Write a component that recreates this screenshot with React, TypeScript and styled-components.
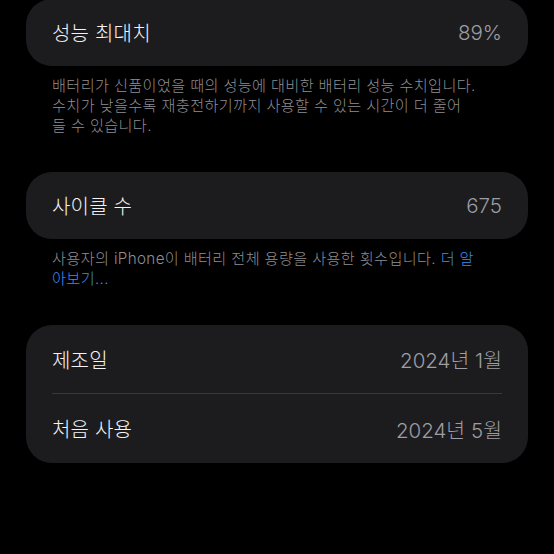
import React from "react";
import styled, { createGlobalStyle } from "styled-components";

const GlobalStyle = createGlobalStyle`
  html, body {
    margin: 0;
    padding: 0;
    background: #000;
  }
  body {
    font-family: Inter, "Noto Sans CJK KR", sans-serif;
    -webkit-font-smoothing: antialiased;
  }
`;

const Page = styled.div`
  width: 554px;
  height: 554px;
  overflow: hidden;
  box-sizing: border-box;
  padding: 0 26px;
  background: #000;
`;

const Inner = styled.div`
  margin-top: -1px;
  display: flex;
  flex-direction: column;
`;

const Card = styled.section`
  background: #1c1c1e;
  border-radius: 26px;
  display: flex;
  flex-direction: column;
`;

const Row = styled.div<{ $h: number; $divider?: boolean }>`
  height: ${(p) => p.$h}px;
  margin: 0 26px;
  display: flex;
  align-items: center;
  justify-content: space-between;
  border-top: ${(p) => (p.$divider ? "1px solid #38383a" : "none")};
`;

const Label = styled.span`
  font-size: 20px;
  font-weight: 300;
  color: #f4f4f6;
  letter-spacing: 0.2px;
`;

const Value = styled.span`
  font-size: 20.5px;
  font-weight: 300;
  color: #9d9da3;
  letter-spacing: 0;
`;

const Footnote = styled.p`
  margin: 10px 26px 36px;
  font-size: 15.2px;
  font-weight: 300;
  line-height: 20px;
  color: #8e8e94;
  letter-spacing: 0.35px;
`;

const Link = styled.span`
  color: #3d8bf3;
`;

export default function App() {
  return (
    <>
      <GlobalStyle />
      <Page>
        <Inner>
          <Card>
            <Row $h={67}>
              <Label>성능 최대치</Label>
              <Value>89%</Value>
            </Row>
          </Card>
          <Footnote>
            배터리가 신품이었을 때의 성능에 대비한 배터리 성능 수치입니다.
            <br />
            수치가 낮을수록 재충전하기까지 사용할 수 있는 시간이 더 줄어
            <br />들 수 있습니다.
          </Footnote>

          <Card>
            <Row $h={67}>
              <Label>사이클 수</Label>
              <Value>675</Value>
            </Row>
          </Card>
          <Footnote>
            사용자의 iPhone이 배터리 전체 용량을 사용한 횟수입니다. <Link>더 알</Link>
            <br />
            <Link>아보기...</Link>
          </Footnote>

          <Card>
            <Row $h={68}>
              <Label>제조일</Label>
              <Value>2024년 1월</Value>
            </Row>
            <Row $h={69} $divider>
              <Label>처음 사용</Label>
              <Value>2024년 5월</Value>
            </Row>
          </Card>
        </Inner>
      </Page>
    </>
  );
}
